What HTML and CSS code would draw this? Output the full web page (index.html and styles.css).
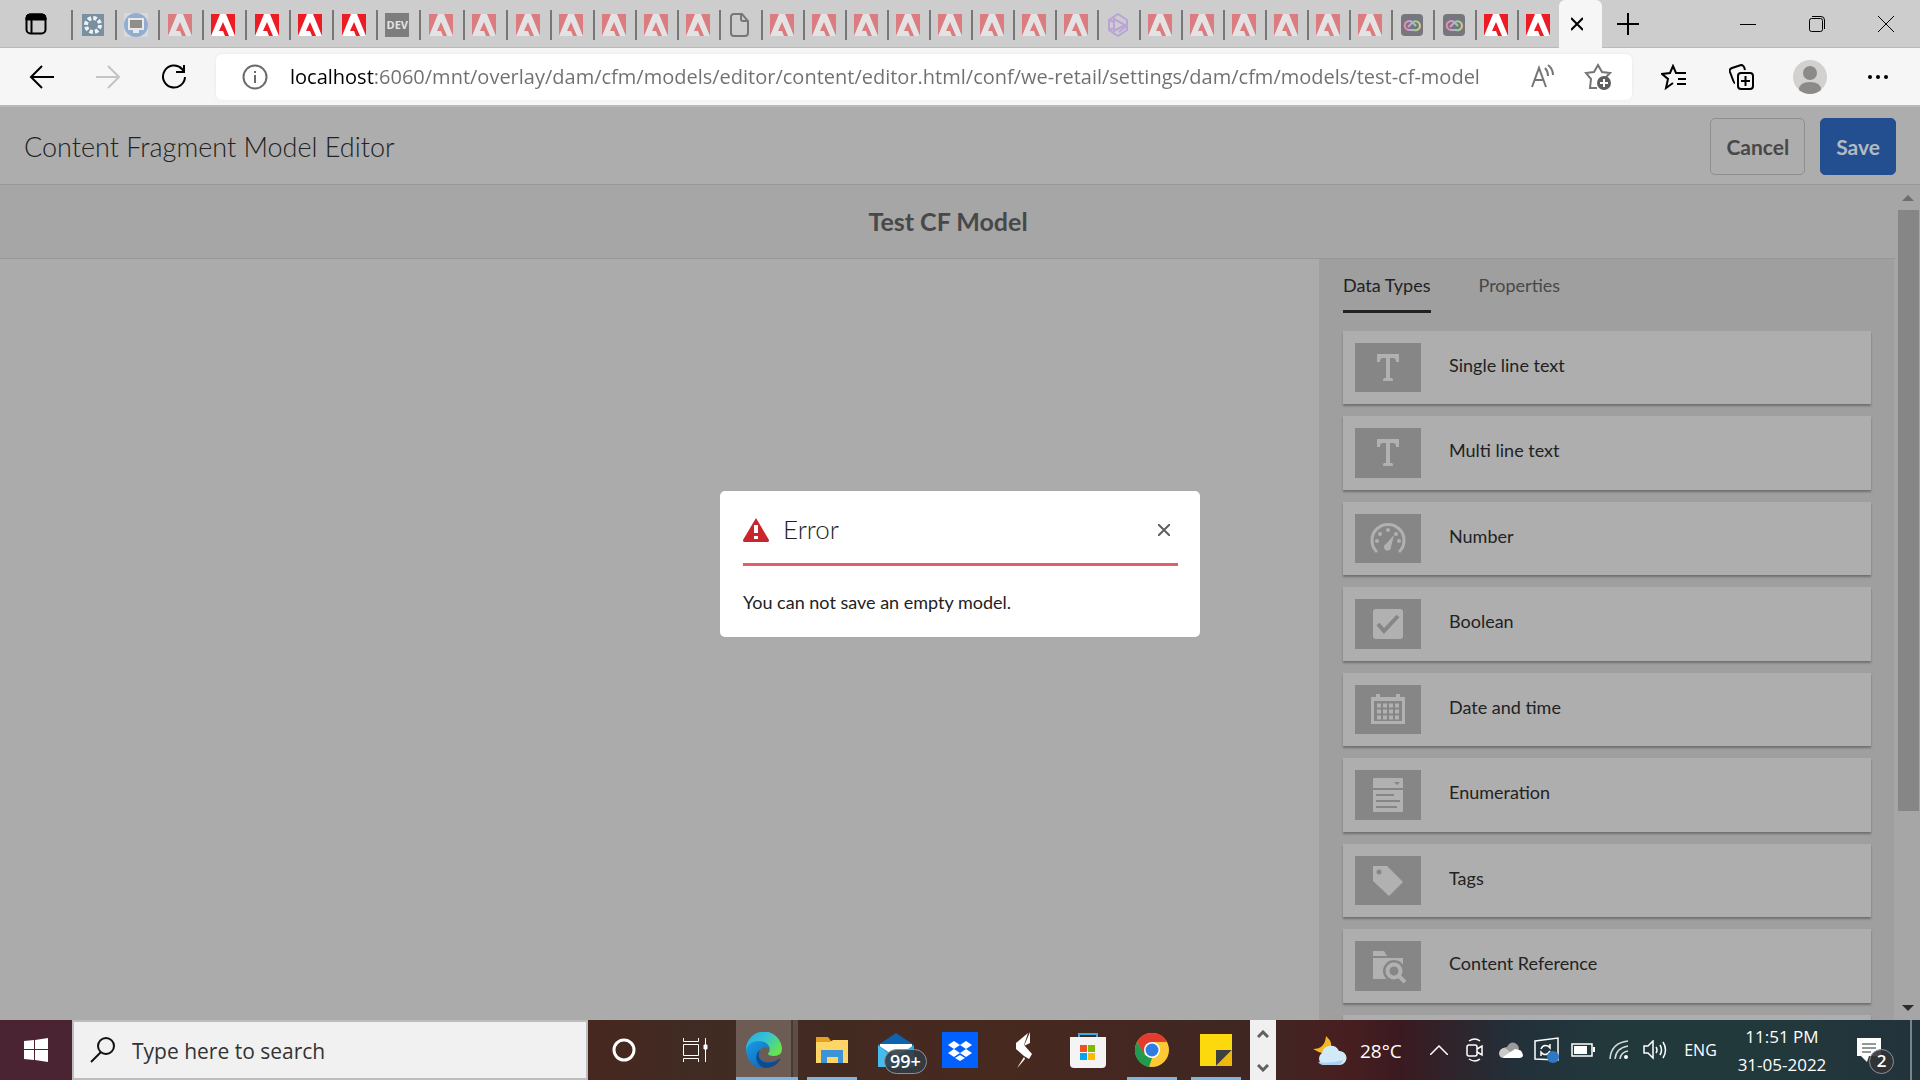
FILE: index.html
```html
<!DOCTYPE html>
<html lang="en">
<head>
  <meta charset="UTF-8">
  <meta name="viewport" content="width=device-width, initial-scale=1.0">
  <title>Content Fragment Model Editor</title>
  <link rel="stylesheet" href="styles.css">
</head>
<body>
  <svg class="sprite" aria-hidden="true">
    <symbol id="adobe" viewBox="0 0 24 22">
      <rect width="24" height="22" fill="#fff"/>
      <path d="M0 0h9L0 22zM15 0h9v22zM12 8l6 14h-4l-2-5H8z" fill="#ec1c24"/>
    </symbol>
    <symbol id="cc" viewBox="0 0 24 24">
      <rect x="1" y="1" width="22" height="22" rx="4" fill="#76767e"/>
      <path d="M8 14l5-5a4.500 4.500 0 1 1 1 8H9a4.500 4.500 0 1 1 3-8l4 4" fill="none" stroke="url(#ccg)" stroke-width="2"/>
    </symbol>
    <symbol id="type" viewBox="0 0 36 36">
      <path d="M7 4h22v8h-3c0-3-1-4-3-4h-3v20h2q1 0 1 3H13q0-3 1-3h2V8h-3c-2 0-3 1-3 4H7z" fill="#b1b1b1"/>
    </symbol>
    <defs>
      <linearGradient id="ccg"><stop offset="0" stop-color="#ea8ba8"/><stop offset=".35" stop-color="#d79be0"/><stop offset=".65" stop-color="#86d5a0"/><stop offset="1" stop-color="#e9c37a"/></linearGradient>
      <linearGradient id="edge1" x1="0" y1="0" x2="1" y2=".6"><stop offset="0" stop-color="#2aa9e0"/><stop offset=".5" stop-color="#35c1d8"/><stop offset="1" stop-color="#66e34f"/></linearGradient>
      <linearGradient id="edge2" x1="0" y1="0" x2="1" y2="1"><stop offset="0" stop-color="#1b9de2"/><stop offset="1" stop-color="#0b57b5"/></linearGradient>
    </defs>
  </svg>

  <div class="browser">
    <div class="tabstrip">
      <button class="tab-actions" aria-label="Tab actions"><svg width="22" height="24" viewBox="0 0 22 24"><rect x="1.500" y="2.500" width="19" height="19" rx="4" fill="none" stroke="#000" stroke-width="2"/><path d="M1 8V6q0-4 4-4h12q4 0 4 4v2zM6 8h1v13H6z" stroke="#000"/></svg></button>
      <div class="tabs tabs-wide">
        <button class="tab" aria-label="Tab"><svg width="24" height="24"><rect x="1" y="1" width="22" height="22" fill="#7890a0"/><circle cx="12" cy="12" r="7" fill="none" stroke="#eef1f3" stroke-width="4" stroke-dasharray="3.500 2"/></svg></button>
        <button class="tab" aria-label="Tab"><svg width="24" height="24"><rect width="24" height="24" fill="#d6dade"/><circle cx="12" cy="12" r="12" fill="#92add0"/><path d="M5 6h14v10H5z" fill="#8e8e8a" stroke="#e8e8e8" stroke-width="2"/><path d="M9 17h6v3H9z" fill="#e8e8e8"/></svg></button>
        <button class="tab faded" aria-label="Tab"><svg><use href="#adobe"/></svg></button>
        <button class="tab" aria-label="Tab"><svg><use href="#adobe"/></svg></button>
        <button class="tab" aria-label="Tab"><svg><use href="#adobe"/></svg></button>
        <button class="tab" aria-label="Tab"><svg><use href="#adobe"/></svg></button>
        <button class="tab" aria-label="Tab"><svg><use href="#adobe"/></svg></button>
        <button class="tab"><span class="dev">DEV</span></button>
        <button class="tab faded" aria-label="Tab"><svg><use href="#adobe"/></svg></button>
        <button class="tab faded" aria-label="Tab"><svg><use href="#adobe"/></svg></button>
        <button class="tab faded" aria-label="Tab"><svg><use href="#adobe"/></svg></button>
        <button class="tab faded" aria-label="Tab"><svg><use href="#adobe"/></svg></button>
      </div>
      <div class="tabs">
        <button class="tab faded" aria-label="Tab"><svg><use href="#adobe"/></svg></button>
        <button class="tab faded" aria-label="Tab"><svg><use href="#adobe"/></svg></button>
        <button class="tab faded" aria-label="Tab"><svg><use href="#adobe"/></svg></button>
        <button class="tab" aria-label="Tab"><svg width="24" height="24" fill="none" stroke="#777" stroke-width="2"><path d="M6 1h8l6 7v12q0 3-3 3H6q-3 0-3-3V4q0-3 3-3zM13 1v5q0 2 2 2h5"/></svg></button>
        <button class="tab faded" aria-label="Tab"><svg><use href="#adobe"/></svg></button>
        <button class="tab faded" aria-label="Tab"><svg><use href="#adobe"/></svg></button>
        <button class="tab faded" aria-label="Tab"><svg><use href="#adobe"/></svg></button>
        <button class="tab faded" aria-label="Tab"><svg><use href="#adobe"/></svg></button>
        <button class="tab faded" aria-label="Tab"><svg><use href="#adobe"/></svg></button>
        <button class="tab faded" aria-label="Tab"><svg><use href="#adobe"/></svg></button>
        <button class="tab faded" aria-label="Tab"><svg><use href="#adobe"/></svg></button>
        <button class="tab faded" aria-label="Tab"><svg><use href="#adobe"/></svg></button>
        <button class="tab" aria-label="Tab"><svg width="24" height="24" fill="none" stroke="#b9a3d9" stroke-width="2"><path d="M12 1l9 6v10l-9 6-9-6V7z"/><path d="M8 6v12l11-6zM3 7l5 2M3 17l5-2M13 19l7-6"/></svg></button>
        <button class="tab faded" aria-label="Tab"><svg><use href="#adobe"/></svg></button>
        <button class="tab faded" aria-label="Tab"><svg><use href="#adobe"/></svg></button>
        <button class="tab faded" aria-label="Tab"><svg><use href="#adobe"/></svg></button>
        <button class="tab faded" aria-label="Tab"><svg><use href="#adobe"/></svg></button>
        <button class="tab faded" aria-label="Tab"><svg><use href="#adobe"/></svg></button>
        <button class="tab faded" aria-label="Tab"><svg><use href="#adobe"/></svg></button>
        <button class="tab" aria-label="Tab"><svg width="24" height="24"><use href="#cc"/></svg></button>
        <button class="tab" aria-label="Tab"><svg width="24" height="24"><use href="#cc"/></svg></button>
        <button class="tab" aria-label="Tab"><svg><use href="#adobe"/></svg></button>
        <button class="tab" aria-label="Tab"><svg><use href="#adobe"/></svg></button>
      </div>
      <button class="tab-current" aria-label="Close tab"><svg width="12" height="14" stroke="#000" stroke-width="2"><path d="M0 1l12 12M12 1L0 13"/></svg></button>
      <button class="new-tab" aria-label="New tab"><svg width="22" height="22" stroke="#000" stroke-width="2"><path d="M11 0v22M0 11h22"/></svg></button>
      <div class="window-buttons">
        <button aria-label="Minimize"><svg width="16" height="16" stroke="#000"><path d="M0 8.500h16"/></svg></button>
        <button aria-label="Restore"><svg width="16" height="16" fill="none" stroke="#000"><rect x=".5" y="2.500" width="13" height="13" rx="2"/><path d="M3 .5h9q3.500 0 3.500 3.500v9"/></svg></button>
        <button aria-label="Close"><svg width="16" height="16" stroke="#000"><path d="M0 0l16 16M16 0L0 16"/></svg></button>
      </div>
    </div>

    <div class="toolbar">
      <button class="nav-button" aria-label="Back"><svg width="26" height="24" fill="none" stroke="#000" stroke-width="2"><path d="M25 12H2M13 1L2 12l11 11"/></svg></button>
      <button class="nav-button" aria-label="Forward" disabled><svg width="26" height="24" fill="none" stroke="#c4c4c4" stroke-width="2"><path d="M1 12h23M13 1l11 11-11 11"/></svg></button>
      <button class="nav-button" aria-label="Refresh"><svg width="26" height="26" fill="none" stroke="#000" stroke-width="2"><path d="M24 13a11 11 0 1 1-3-8l2 3M23 1v7h-8"/></svg></button>
      <div class="address">
        <svg width="26" height="26" fill="none" stroke="#6b6b6b" stroke-width="2"><circle cx="13" cy="13" r="11.500"/><path d="M13 11v8M13 7v2"/></svg>
        <input class="url" type="text" aria-label="Address" value="localhost:6060/mnt/overlay/dam/cfm/models/editor/content/editor.html/conf/we-retail/settings/dam/cfm/models/test-cf-model">
        <svg width="26" height="26" fill="none" stroke="#757575" stroke-width="2"><path d="M2 23L9 4l7 19M5 16h9M15 4q3 3 3 8M18 1q5 4 5 10"/></svg>
        <svg width="28" height="28" fill="none" stroke="#757575" stroke-width="2"><path d="M13 25l-7 0 1-9-5-6 8-1 4-7 4 7 8 1-4 4"/><circle cx="20" cy="20" r="7" fill="#5f5f5f" stroke="none"/><path d="M16 20h8M20 16v8" stroke="#fff"/></svg>
      </div>
      <div class="toolbar-right">
        <button aria-label="Favorites"><svg width="26" height="26" fill="none" stroke="#000" stroke-width="2"><path d="M12 19l-7 5 2-9-6-5 8-1 3-7 3 7h10M17 15h8M16 20h9"/></svg></button>
        <button aria-label="Collections"><svg width="26" height="26" fill="none" stroke="#000" stroke-width="2"><rect x="9" y="9" width="15" height="16" rx="3"/><path d="M16.500 12v10M12 17h9M6 19q-1 0-2-3L1 8q-1-3 2-4l9-3q3 0 4 5"/></svg></button>
        <button aria-label="Profile"><svg width="34" height="34"><circle cx="17" cy="17" r="17" fill="#d3d1cf"/><circle cx="17" cy="13" r="7" fill="#8c8a88"/><path d="M6 30q0-8 11-8t11 8q-5 4-11 4T6 30z" fill="#8c8a88"/></svg></button>
        <button aria-label="Settings and more"><svg width="22" height="6"><circle cx="3" cy="3" r="2"/><circle cx="11" cy="3" r="2"/><circle cx="19" cy="3" r="2"/></svg></button>
      </div>
    </div>

    <div class="page">
      <header class="app-header">
        <h1>Content Fragment Model Editor</h1>
        <button class="btn">Cancel</button>
        <button class="btn btn-primary">Save</button>
      </header>
      <div class="workspace">
        <main class="editor">
          <h2 class="model-title">Test CF Model</h2>
          <div class="editor-body">
            <div class="canvas"></div>
            <aside class="panel">
              <div class="panel-tabs" role="tablist">
                <button class="panel-tab selected" role="tab" aria-selected="true">Data Types</button>
                <button class="panel-tab" role="tab" aria-selected="false">Properties</button>
              </div>
              <ul class="types">
                <li class="type"><span class="thumb"><svg><use href="#type"/></svg></span><span>Single line text</span></li>
                <li class="type"><span class="thumb"><svg><use href="#type"/></svg></span><span>Multi line text</span></li>
                <li class="type"><span class="thumb"><svg viewBox="0 0 36 36" fill="#b1b1b1"><path d="M7 31A16 16 0 1 1 29 31" fill="none" stroke="#b1b1b1" stroke-width="3"/><circle cx="7" cy="20" r="2"/><circle cx="10" cy="13" r="2"/><circle cx="18" cy="9" r="2"/><circle cx="26" cy="13" r="2"/><circle cx="29" cy="20" r="2"/><path d="M24 14l-3 12a3.500 3.500 0 1 1-5-3z"/></svg></span><span>Number</span></li>
                <li class="type"><span class="thumb"><svg viewBox="0 0 36 36"><rect x="3" y="3" width="30" height="30" rx="3" fill="#b1b1b1"/><path d="M8 18l6 7L28 10" fill="none" stroke="#868686" stroke-width="4"/></svg></span><span>Boolean</span></li>
                <li class="type"><span class="thumb"><svg viewBox="0 0 36 36"><path d="M1 5h34v27H1z" fill="#b1b1b1"/><path d="M4 9h28v20H4z" fill="#868686"/><path d="M8 2v7M28 2v7" stroke="#b1b1b1" stroke-width="4"/><path d="M7 13.500h22M7 19.500h22M7 25.500h22" stroke="#b1b1b1" stroke-width="4" stroke-dasharray="4 2"/></svg></span><span>Date and time</span></li>
                <li class="type"><span class="thumb"><svg viewBox="0 0 36 36"><path d="M3 2q0-1 1-1h28q1 0 1 1v9H3zM3 13h30v21q0 1-1 1H4q-1 0-1-1z" fill="#b1b1b1"/><path d="M24 5h6l-3 3zM6 17h18v2H6zM6 23h24v2H6zM6 29h21v2H6z" fill="#868686"/></svg></span><span>Enumeration</span></li>
                <li class="type"><span class="thumb"><svg viewBox="0 0 36 36"><path d="M3 3h14l16 16-14 14L3 18z" fill="#b1b1b1"/><circle cx="9" cy="9" r="2.500" fill="#868686"/></svg></span><span>Tags</span></li>
                <li class="type"><span class="thumb"><svg viewBox="0 0 36 36"><path d="M3 3h11l3 5H3zM3 10h30v21H3z" fill="#b1b1b1"/><circle cx="24" cy="23" r="11" fill="#868686"/><path d="M28 28l7 7" stroke="#868686" stroke-width="7"/><circle cx="24" cy="23" r="6.500" fill="none" stroke="#b1b1b1" stroke-width="4"/><path d="M29 28l6 6" stroke="#b1b1b1" stroke-width="4"/></svg></span><span>Content Reference</span></li>
                <li class="type"></li>
              </ul>
            </aside>
          </div>
        </main>
        <div class="scrollbar">
          <svg width="12" height="6" fill="#6d6d6d"><path d="M0 6l6-6 6 6z"/></svg>
          <div class="track"><div class="thumb-bar"></div></div>
          <svg width="12" height="6" fill="#2d2d2d"><path d="M0 0h12L6 6z"/></svg>
        </div>
      </div>

      <div class="backdrop">
        <div class="dialog" role="dialog" aria-labelledby="error-title">
          <div class="dialog-header">
            <svg width="26" height="24"><path d="M13 0l13 22q0 2-1 2H1q-1 0-1-2z" fill="#c9252d"/><path d="M11 7h4v8h-4zM11 18h4v3h-4z" fill="#fff"/></svg>
            <h3 id="error-title">Error</h3>
            <button class="close" aria-label="Close"><svg width="12" height="12" stroke="#606060" stroke-width="2"><path d="M0 0l12 12M12 0L0 12"/></svg></button>
          </div>
          <p>You can not save an empty model.</p>
        </div>
      </div>
    </div>
  </div>

  <footer class="taskbar">
    <button class="start" aria-label="Start"><svg width="24" height="24" fill="#fff"><path d="M0 3l10-1v9H0zM11 2l13-2v11H11zM0 12h10v10L0 21zM11 12h13v12l-13-2z"/></svg></button>
    <label class="search">
      <svg width="26" height="26" fill="none" stroke="#111" stroke-width="2"><circle cx="16" cy="9" r="8"/><path d="M11 15L1 25"/></svg>
      <input type="text" placeholder="Type here to search" aria-label="Search">
    </label>
    <button class="shell-button" aria-label="Cortana"><svg width="24" height="24"><circle cx="12" cy="12" r="10" fill="none" stroke="#fff" stroke-width="3"/></svg></button>
    <button class="shell-button" aria-label="Task view"><svg width="26" height="24" fill="none" stroke="#fff"><path d="M1.500 0v3.500h15V0M1.500 24v-3.500h15V24M1.500 6.500h15v11h-15zM23.500 0v24"/><path d="M22 7h3v4h-3z" fill="#fff"/></svg></button>
    <div class="apps">
      <button class="app active" aria-label="Microsoft Edge"><svg width="36" height="36"><path d="M0 18A18 18 0 0 1 36 17q0 7-8 7c-6 0-7-2-5-4s-1-8-7-8q-10 0-16 6z" fill="url(#edge1)"/><path d="M0 18q3-9 13-9 9 0 11 8-6-4-10 1c-4 6 2 13 11 12q5 0 8-3-5 9-15 9Q2 36 0 18z" fill="url(#edge2)"/><path d="M14 18c-4 7 1 15 13 12q4-1 6-3 2-1 1 1-5 8-15 8C8 33 9 21 14 18z" fill="#114a8b"/></svg></button>
      <button class="app open" aria-label="File Explorer"><svg width="32" height="28"><path d="M0 1h12l3 4h17v22H0z" fill="#e2a21b"/><path d="M0 6h14l3-2h15v23H0z" fill="#ffd567"/><path d="M5 14h22v13h-5v-6H11v6H5z" fill="#3c93d8"/></svg></button>
      <button class="app" aria-label="Mail"><svg width="36" height="34"><path d="M0 12L18 0l18 12v22H0z" fill="#0f62ae"/><path d="M2 11h32v14H2z" fill="#fff"/><path d="M0 12l18 12 18-12v22H0z" fill="#2fa5e2"/><path d="M0 12l24 22H0z" fill="#45bbf0"/></svg><span class="mail-count">99+</span></button>
      <button class="app" aria-label="Dropbox"><svg width="36" height="36"><path d="M0 0h36v36H0z" fill="#0061ff"/><path d="M12 9l6 4-6 4-6-4zM24 9l6 4-6 4-6-4zM12 17l6 4-6 4-6-4zM24 17l6 4-6 4-6-4zM18 23l5 3-5 3-5-3z" fill="#fff"/></svg></button>
      <button class="app" aria-label="Stylus app"><svg width="18" height="36" fill="#fff"><path d="M15 0v11L9 14zM13 1L1 11v6l8 7 5 3 3-5-8-9zM2 36l7-11 1 2-6 7z"/></svg></button>
      <button class="app" aria-label="Microsoft Store"><svg width="36" height="36"><path d="M9 7V2h18v5" fill="none" stroke="#35aee5" stroke-width="2"/><path d="M0 5h36v27q0 4-4 4H4q-4 0-4-4z" fill="#f4f4f4"/><path d="M10 13h7v7h-7z" fill="#f25022"/><path d="M18 13h7v7h-7z" fill="#7fba00"/><path d="M10 21h7v7h-7z" fill="#00a4ef"/><path d="M18 21h7v7h-7z" fill="#ffb900"/></svg></button>
      <button class="app open" aria-label="Google Chrome"><svg width="34" height="34"><circle cx="17" cy="17" r="17" fill="#fcc934"/><path d="M2 9a17 17 0 0 1 30 0H17L9 21z" fill="#e33b2e"/><path d="M2 9l8 13 7 3-3 9A17 17 0 0 1 2 9z" fill="#219a4f"/><circle cx="17" cy="17" r="8" fill="#fff"/><circle cx="17" cy="17" r="6.500" fill="#2f7de1"/></svg></button>
      <button class="app open" aria-label="Sticky Notes"><svg width="32" height="32"><path d="M0 0h32v32H0z" fill="#fcd90c"/><path d="M16 16h16L16 32z" fill="#3f3f3f"/><path d="M32 16v16H16z" fill="#edb90a"/></svg></button>
    </div>
    <div class="apps-scroll">
      <svg width="12" height="8" fill="none" stroke="#606060" stroke-width="3"><path d="M1 7l5-5 5 5"/></svg>
      <svg width="12" height="8" fill="none" stroke="#606060" stroke-width="3"><path d="M1 1l5 5 5-5"/></svg>
    </div>
    <div class="tray">
      <span class="weather"><svg width="34" height="30"><path d="M13 0q8 7 4 14T0 13q12 0 13-13z" fill="#f6b91d"/><path d="M10 29a7 7 0 0 1-1-12 9 9 0 0 1 17-2 7 7 0 0 1 1 14z" fill="#d2e9f8"/><path d="M5 26q12 2 25-2-1 5-6 5H11q-4 0-6-3z" fill="#a9d2f0"/></svg>28°C</span>
      <span class="tray-icon"><svg width="18" height="10" fill="none" stroke="#fff" stroke-width="1.500"><path d="M0 10l9-9 9 9"/></svg></span>
      <span class="tray-icon"><svg width="18" height="24" fill="none" stroke="#fff" stroke-width="1.500"><rect x="1" y="7" width="10" height="11" rx="2"/><path d="M11 11l5-3v9l-5-3M3 3q6-4 11 0M3 21q6 4 11 0"/></svg></span>
      <span class="tray-icon"><svg width="24" height="18"><path d="M2 12q0-6 6-6 3-6 8-4 4 2 4 6l-12 8z" fill="#9a9a9a"/><path d="M5 17q-5 0-5-5 1-5 6-5l14 10z" fill="#c9c9c9"/><path d="M4 16l12-8q7 0 8 6 0 3-4 3H5z" fill="#fff"/></svg></span>
      <span class="tray-icon"><svg width="26" height="26" fill="none" stroke="#fff" stroke-width="1.500"><path d="M1 4l23-3v22L1 22zM7 12q2-5 7-3l2 2V7M16 14q-3 5-7 3l-2-2v4"/><circle cx="19" cy="20" r="6" fill="#2f78c4" stroke="none"/></svg></span>
      <span class="tray-icon"><svg width="24" height="14"><rect x="1" y="1" width="20" height="12" fill="none" stroke="#fff" stroke-width="1.500"/><path d="M3 3h13v8H3zM22 4h2v5h-2z" fill="#fff"/></svg></span>
      <span class="tray-icon"><svg width="20" height="20" fill="none" stroke="#d5dbdc" stroke-width="1.500"><path d="M1 19Q2 3 19 1M6 19Q7 8 19 6M11 19q1-7 8-8"/><circle cx="17" cy="17" r="2" fill="#fff" stroke="none"/></svg></span>
      <span class="tray-icon"><svg width="24" height="20" fill="none" stroke="#fff" stroke-width="1.500"><path d="M1 6h4l5-5v17l-5-5H1zM13 7q2 3 0 6M17 5q3 5 0 10M20 2q5 8 0 16"/></svg></span>
      <span class="lang">ENG</span>
      <div class="clock"><span>11:51 PM</span><span>31-05-2022</span></div>
      <button class="notifications" aria-label="Notifications"><svg width="24" height="24"><path d="M0 0h24v18H12l-2 6-6-6H0z" fill="#fff"/><path d="M5 6h14M5 10h14M5 14h9" stroke="#22333a"/></svg><span class="notice-count">2</span></button>
    </div>
  </footer>
</body>
</html>
```
FILE: styles.css
```css
* { margin: 0; padding: 0; box-sizing: border-box; }
body {
  display: flex;
  flex-direction: column;
  height: 100vh;
  overflow: hidden;
  font-family: "Open Sans", sans-serif;
  font-size: 17px;
  color: #222;
}
button {
  display: flex;
  align-items: center;
  justify-content: center;
  border: none;
  background: none;
  font-family: inherit;
  color: inherit;
}
svg { display: block; flex: none; }
.sprite { position: absolute; width: 0; height: 0; }

/* browser window */
.browser { flex: 1; min-height: 0; display: flex; flex-direction: column; }
.tabstrip { display: flex; height: 48px; background: #cdcdcd; border-bottom: 1px solid #b9b9b9; }
.tab-actions { width: 71px; }
.tabs { display: flex; align-items: center; }
.tabs-wide { width: 522px; }
.tabs-wide .tab { flex: 1; }
.tab { width: 42px; height: 30px; padding-right: 2px; border-left: 2px solid #777; margin-top: 3px; }
.tab svg:not([width]) { width: 24px; height: 22px; }
.faded svg { opacity: .45; }
.dev {
  width: 24px;
  height: 24px;
  line-height: 24px;
  background: #7d7d7d;
  color: #e3e3e3;
  font-size: 11px;
  font-weight: 700;
}
.tab-current {
  width: 43px;
  height: 48px;
  padding-right: 7px;
  background: #f6f6f6;
  border-radius: 6px 6px 0 0;
}
.new-tab { width: 52px; }
.window-buttons { display: flex; margin-left: auto; }
.window-buttons button { width: 69px; }

.toolbar {
  display: flex;
  align-items: center;
  height: 59px;
  padding: 0 8px 0 9px;
  background: #f6f6f6;
  border-bottom: 2px solid #b9b9b9;
}
.nav-button { width: 66px; height: 46px; }
.address {
  flex: 1;
  display: flex;
  align-items: center;
  height: 46px;
  margin: 0 8px 0 9px;
  padding: 0 20px 0 26px;
  background: #fff;
  border-radius: 6px;
  box-shadow: 0 0 4px rgba(0,0,0,0.06);
}
.url {
  flex: 1;
  height: 40px;
  margin-left: 22px;
  border: none;
  font: 20px "Open Sans", sans-serif;
  /* host name dark, path grey */
  background: linear-gradient(90deg, #000 84px, #6f6f6f 84px);
  -webkit-background-clip: text;
  background-clip: text;
  color: transparent;
}
.address svg:last-child { margin-left: 28px; }
.toolbar-right { display: flex; }
.toolbar-right button { width: 68px; height: 46px; }

/* editor page */
.page {
  flex: 1;
  min-height: 0;
  position: relative;
  display: flex;
  flex-direction: column;
  background: #ababab;
  font-family: Lato, sans-serif;
  font-size: 18px;
}
.app-header {
  display: flex;
  align-items: center;
  gap: 15px;
  height: 78px;
  padding: 2px 24px 0;
  background: #adadad;
  border-bottom: 1px solid #989898;
}
.app-header h1 { flex: 1; font-size: 27px; font-weight: 300; }
.btn {
  height: 57px;
  padding: 0 15px;
  border: 1px solid #8f8f8f;
  border-radius: 5px;
  font-size: 21px;
  font-weight: 700;
  color: #484848;
}
.btn-primary { background: #234f91; border-color: #234f91; color: #b4bac3; }
.workspace { flex: 1; min-height: 0; display: flex; }
.editor { flex: 1; display: flex; flex-direction: column; overflow: hidden; }
.model-title {
  padding: 20px 0;
  line-height: 33px;
  background: #a6a6a6;
  border-bottom: 1px solid #989898;
  text-align: center;
  font-size: 25px;
  color: #484848;
}
.editor-body { flex: 1; min-height: 0; display: flex; }
.canvas { flex: 1; }
.panel {
  width: 577px;
  padding: 14px 23px 0 24px;
  background: #9f9f9f;
  border-right: 2px solid #a6a6a6;
  overflow: hidden;
}
.panel-tabs { display: flex; gap: 48px; margin-bottom: 18px; }
.panel-tab {
  padding-bottom: 13px;
  border-bottom: 3px solid transparent;
  font-size: 18px;
  line-height: 24px;
  color: #484848;
}
.panel-tab.selected { border-color: #222; color: #222; }
.types { list-style: none; display: flex; flex-direction: column; gap: 12px; }
.type {
  display: flex;
  gap: 28px;
  height: 73px;
  padding: 12px;
  background: #aeaeae;
  box-shadow: 0 2px 2px rgba(0,0,0,0.3);
  line-height: 45px;
}
.type:nth-child(even) { height: 74px; }
.thumb { display: flex; align-items: center; justify-content: center; width: 66px; background: #868686; }
.thumb svg { width: 36px; height: 36px; }
.scrollbar {
  display: flex;
  flex-direction: column;
  align-items: center;
  gap: 9px;
  width: 24px;
  padding: 10px 0 9px;
  background: #a6a6a6;
}
.track { flex: 1; width: 21px; }
.thumb-bar { height: calc(100% * 13 / 17); background: #868686; }

.backdrop {
  position: absolute;
  inset: 0;
  display: flex;
  align-items: center;
  justify-content: center;
}
.dialog { width: 480px; padding: 0 22px 22px 23px; border-radius: 5px; background: #fff; }
.dialog-header {
  display: flex;
  align-items: center;
  height: 75px;
  padding: 7px 8px 0 0;
  border-bottom: 3px solid #de6169;
}
.dialog h3 { flex: 1; margin-left: 14px; padding-bottom: 3px; font-size: 26px; font-weight: 300; }
.close { width: 12px; height: 12px; }
.dialog p { padding-top: 24px; line-height: 25px; }

/* taskbar */
.taskbar {
  display: flex;
  height: 60px;
  background: linear-gradient(90deg, #4a2432 0, #4a2432 4%, #47271f 31%, #402c24 36%, #47291f 52%, #3f2622 66%, #481f20 70%, #3a1a20 73%, #22303a 79%, #22393c 84%, #22393c 93%, #22323b 100%);
  color: #fff;
}
.start { width: 72px; padding-right: 1px; }
.search {
  display: flex;
  align-items: center;
  gap: 16px;
  width: 516px;
  padding-left: 16px;
  background: #f1f1f1;
  border: 2px solid #bdbdbd;
}
.search input {
  flex: 1;
  padding-top: 2px;
  border: none;
  background: none;
  font: 21px "Open Sans", sans-serif;
}
.search input::placeholder { color: #333; }
.shell-button { width: 71px; }
.apps { display: flex; margin-left: 6px; }
.app { position: relative; width: 64px; }
.active {
  padding-right: 9px;
  background: linear-gradient(90deg, #6d5c54 55px, #493b34 55px, #493b34 57px, #5f4e47 57px) no-repeat;
  background-size: 62px 100%;
}
.open::after, .active::after {
  content: "";
  position: absolute;
  left: 7px;
  bottom: 0;
  width: 50px;
  height: 3px;
  background: #7fb4e2;
}
.active::after { left: 0; width: 62px; }
.mail-count {
  position: absolute;
  left: 20px;
  top: 29px;
  height: 25px;
  padding: 0 5px;
  border: 1px solid #8d9194;
  border-radius: 13px;
  background: rgba(50,60,68,0.9);
  font-size: 18px;
  font-weight: 600;
  line-height: 23px;
}
.apps-scroll {
  display: flex;
  flex-direction: column;
  align-items: center;
  justify-content: space-between;
  width: 26px;
  margin-left: 2px;
  padding: 10px 0 8px;
  background: #f0f0f0;
}
.tray { display: flex; align-items: center; margin-left: auto; padding-right: 8px; }
.weather { display: flex; align-items: center; gap: 13px; width: 108px; padding-top: 2px; font-size: 19px; white-space: nowrap; }
.tray-icon { display: flex; justify-content: center; width: 36px; }
.lang { width: 55px; text-align: center; font-size: 16px; }
.clock { display: flex; flex-direction: column; width: 108px; padding-top: 1px; text-align: center; font-size: 17px; line-height: 28px; }
.notifications {
  position: relative;
  width: 76px;
  height: 60px;
  padding-right: 8px;
  border-right: 2px solid #75858a;
}
.notice-count {
  position: absolute;
  left: 33px;
  top: 29px;
  width: 25px;
  height: 25px;
  border: 1px solid #8d9194;
  border-radius: 50%;
  background: rgba(50,50,54,0.9);
  font-size: 17px;
  font-weight: 600;
  line-height: 22px;
}
```
